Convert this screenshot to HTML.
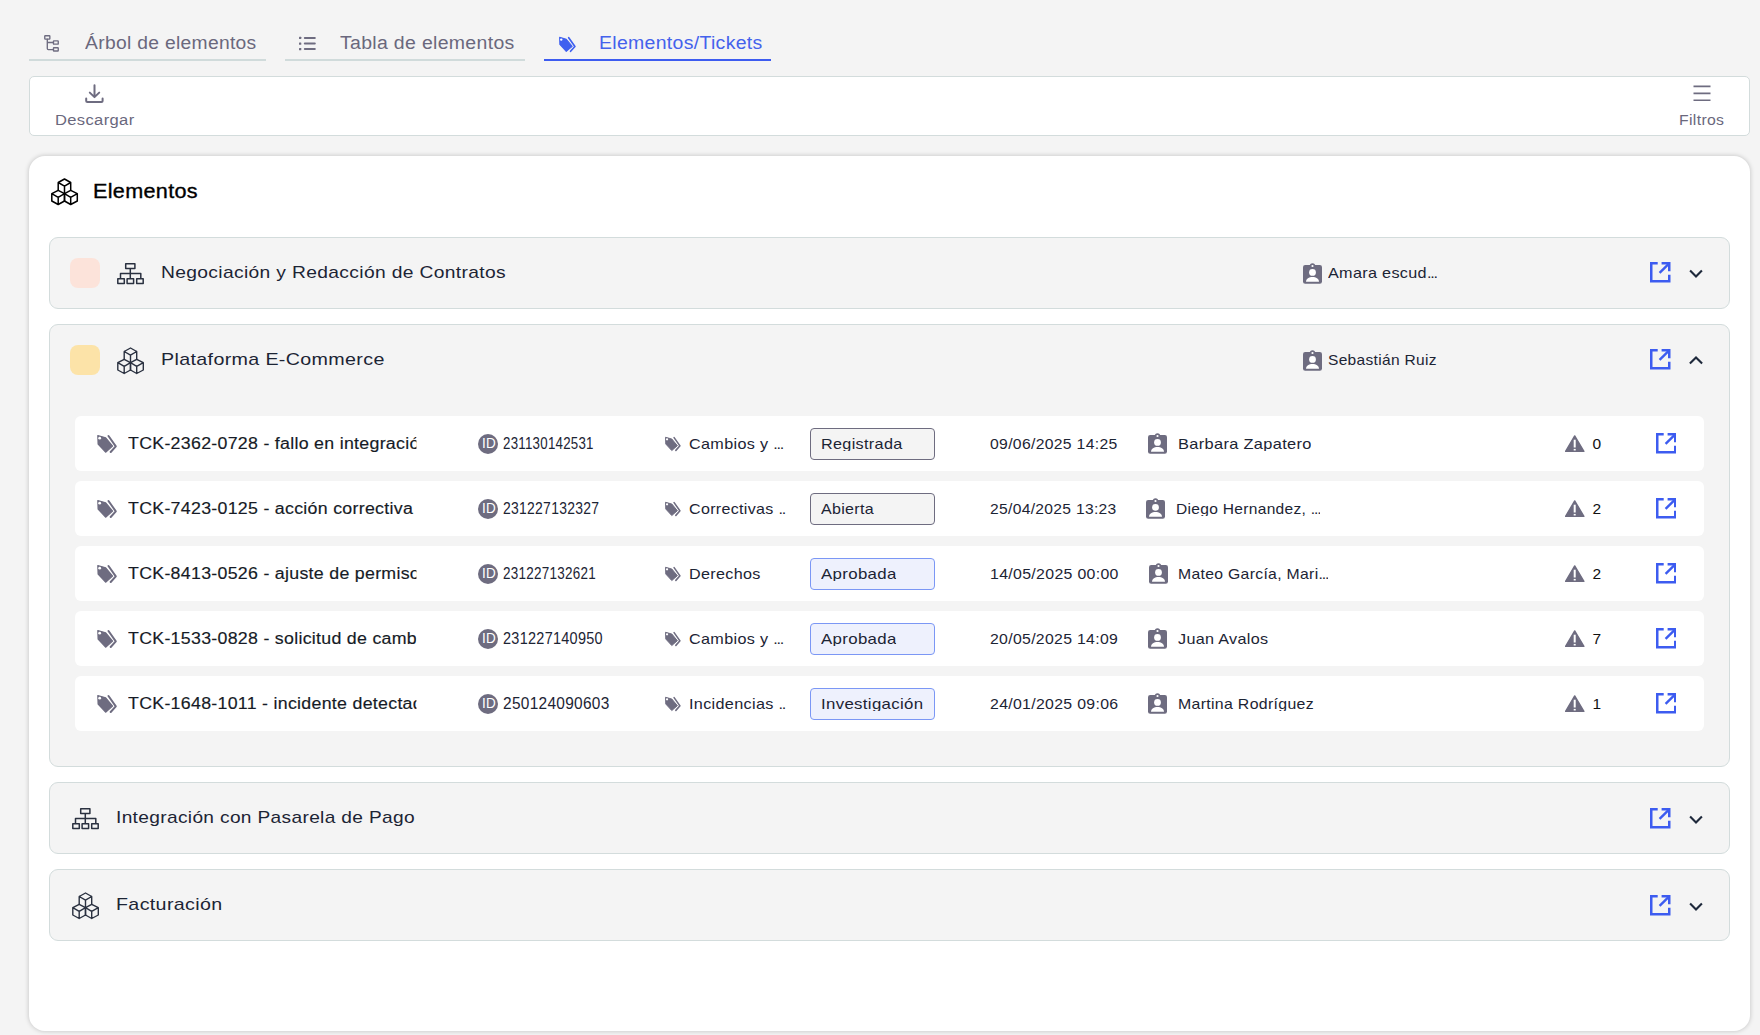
<!DOCTYPE html>
<html><head><meta charset="utf-8"><title>Elementos</title>
<style>
html,body{margin:0;padding:0;}
body{width:1760px;height:1035px;overflow:hidden;background:#f4f4f4;position:relative;font-family:"Liberation Sans", sans-serif;}
.a{position:absolute;display:block;}
.t{position:absolute;white-space:nowrap;line-height:1;}
.box{position:absolute;box-sizing:border-box;}
.dd{letter-spacing:-1.1px;}
</style></head><body>
<div class="box" style="left:29px;top:59px;width:237px;height:2px;background:#d0dbdb"></div>
<div class="box" style="left:285px;top:59px;width:240px;height:2px;background:#d0dbdb"></div>
<div class="box" style="left:544px;top:59px;width:227px;height:2px;background:#3d5cf0"></div>
<svg class="a" style="left:43px;top:34px" width="18" height="20" viewBox="0 0 18 20" fill="none" stroke="#6e6c80" stroke-width="1.35" stroke-linecap="round" stroke-linejoin="round">
<rect x="1.75" y="1.75" width="5.1" height="3.3" rx="0.5"/><rect x="10.45" y="6.85" width="4.8" height="3.3" rx="0.5"/><rect x="10.45" y="13.75" width="4.8" height="3.2" rx="0.5"/>
<path d="M4.3 5.05V14.6Q4.3 15.6 5.3 15.6H10.45M4.3 8.5H10.45"/></svg>
<svg class="a" style="left:299px;top:36px" width="18" height="16" viewBox="0 0 18 16" fill="#6e6c80">
<rect x="0" y="0.8" width="2.3" height="2.3" rx=".5"/><rect x="0" y="6.4" width="2.3" height="2.3" rx=".5"/><rect x="0" y="11.9" width="2.3" height="2.3" rx=".5"/>
<rect x="4.8" y="0.9" width="12" height="2.1" rx="1"/><rect x="4.8" y="6.5" width="12" height="2.1" rx="1"/><rect x="4.8" y="12" width="12" height="2.1" rx="1"/></svg>
<svg class="a" style="left:557.5px;top:35.6px" width="18" height="17" viewBox="0 0 21 20">
<path fill="#3f60ef" stroke="#3f60ef" stroke-width="1.2" stroke-linejoin="round" d="M1.8 1.6L9.7 3.8L16.6 12.1L9.6 18.2L2.1 10Z"/>
<circle cx="3.7" cy="4.2" r="1.4" fill="#fff"/>
<path fill="none" stroke="#3f60ef" stroke-width="2" stroke-linecap="round" stroke-linejoin="round" d="M12.5 2L19.8 12.3L14.7 18"/></svg>
<div class="t" style="left:84.5px;top:33.8px;font-size:18px;letter-spacing:0.3px;color:#6a687d;font-weight:400;transform:scaleX(1.069);transform-origin:0 0;">Árbol de elementos</div>
<div class="t" style="left:340.0px;top:33.8px;font-size:18px;letter-spacing:0.3px;color:#6a687d;font-weight:400;transform:scaleX(1.081);transform-origin:0 0;">Tabla de elementos</div>
<div class="t" style="left:599.0px;top:33.8px;font-size:18px;letter-spacing:0.3px;color:#4462ec;font-weight:400;transform:scaleX(1.08);transform-origin:0 0;">Elementos/Tickets</div>
<div class="box" style="left:29px;top:76px;width:1721px;height:60px;background:#fff;border:1px solid #d3dcdc;border-radius:5px"></div>
<svg class="a" style="left:85px;top:84px" width="20" height="20" viewBox="0 0 20 20" fill="none" stroke="#6e6c80" stroke-width="2" stroke-linecap="round" stroke-linejoin="round">
<path d="M9.5 1.2V12.8M4.8 8.6L9.5 13.1L14.2 8.6M1.2 14.6V17Q1.2 18.1 2.4 18.1H16.5Q17.6 18.1 17.6 17V14.6"/></svg>
<div class="t" style="left:55.0px;top:113.1px;font-size:14px;letter-spacing:0.3px;color:#6a687d;font-weight:400;transform:scaleX(1.182);transform-origin:0 0;">Descargar</div>
<svg class="a" style="left:1692.6px;top:85.3px" width="18" height="16" viewBox="0 0 18 16" fill="none" stroke="#6e6c80" stroke-width="1.6">
<path d="M0.5 1.4H17.5M0.5 8.4H17.5M0.5 15.4H17.5"/></svg>
<div class="t" style="left:1679.0px;top:113.1px;font-size:14px;letter-spacing:0.3px;color:#6a687d;font-weight:400;transform:scaleX(1.128);transform-origin:0 0;">Filtros</div>
<div class="box" style="left:29px;top:156px;width:1721px;height:875px;background:#fff;border-radius:16px;box-shadow:0 0 5px rgba(0,0,0,0.22)"></div>
<svg class="a" style="left:51px;top:178px" width="28" height="28" viewBox="0 0 28 28" fill="none" stroke="#000" stroke-width="1.5" stroke-linejoin="round" stroke-linecap="round">
<path d="M13.5 1L19.7 4.5L13.5 8.1L7.2 4.5Z M7.2 4.5V12.3 M19.7 4.5V12.3 M13.5 8.1V23"/>
<path d="M7.2 12.3L13.5 15.7L7.2 19.3L0.8 15.7Z M0.8 15.7V23L7.2 26.5L13.5 23V15.7 M7.2 19.3V26.5"/>
<path d="M19.7 12.3L26.3 15.7L19.7 19.3L13.5 15.7Z M26.3 15.7V23L19.7 26.5L13.5 23 M19.7 19.3V26.5"/>
</svg>
<div class="t" style="left:93.0px;top:180.8px;font-size:20px;letter-spacing:0.3px;color:#000;font-weight:400;transform:scaleX(1.08);transform-origin:0 0;-webkit-text-stroke:0.35px #000;">Elementos</div>
<div class="box" style="left:49px;top:237px;width:1681px;height:72px;background:#f4f4f4;border:1px solid #d3dcdc;border-radius:9px"></div>
<div class="box" style="left:70px;top:258px;width:30px;height:30px;background:#fce3da;border-radius:8px"></div>
<svg class="a" style="left:117px;top:263px" width="28" height="22" viewBox="0 0 28 22" fill="none" stroke="#2a3140" stroke-width="1.5" stroke-linejoin="round">
<rect x="8.7" y="0.8" width="9.2" height="4.8"/><path d="M13.3 5.6V10.6M3.5 15.8V10.6H23.8V15.8M13.3 10.6V15.8"/>
<rect x="0.8" y="15.8" width="6.5" height="4.8"/><rect x="10.1" y="15.8" width="6.5" height="4.8"/><rect x="19.7" y="15.8" width="6.5" height="4.8"/>
</svg>
<div class="t" style="left:161.0px;top:264.1px;font-size:17px;letter-spacing:0.3px;color:#1c2434;font-weight:400;transform:scaleX(1.132);transform-origin:0 0;">Negociación y Redacción de Contratos</div>
<svg class="a" style="left:1303px;top:263px" width="19" height="21" viewBox="0 0 19 21">
<rect x="0" y="2" width="19" height="18.8" rx="2.2" fill="#6e6c80"/><circle cx="9.5" cy="3" r="2.7" fill="#6e6c80"/><circle cx="9.5" cy="3" r="1.1" fill="#fff"/>
<circle cx="9.5" cy="9.4" r="3.4" fill="#fff"/><path fill="#fff" d="M3 18.8C3 15.6 6 13.9 9.5 13.9S16 15.6 16 18.8Z"/></svg>
<div class="t" style="left:1327.5px;top:265.3px;font-size:15px;letter-spacing:0.3px;color:#1c2434;font-weight:400;transform:scaleX(1.079);transform-origin:0 0;">Amara escud<span class="dd">...</span></div>
<svg class="a" style="left:1650px;top:262px" width="20.5" height="20.5" viewBox="0 0 20.5 20.5">
<path fill="#3d5cf0" d="M0 0H7.7V2.5H2.5V18H18V12.75H20.5V20.5H0Z M11.6 0H20.5V9.3H18V2.5H11.6Z"/><path stroke="#3d5cf0" stroke-width="2.4" d="M9.6 10.9L19.2 1.3"/></svg>
<svg class="a" style="left:1689.1px;top:269px" width="14" height="9" viewBox="0 0 14 9" fill="none" stroke="#1e293b" stroke-width="2.1" stroke-linecap="butt" stroke-linejoin="miter"><path d="M1.1 1.5L7 7.4L12.9 1.5"/></svg>
<div class="box" style="left:49px;top:324px;width:1681px;height:443px;background:#f4f4f4;border:1px solid #d3dcdc;border-radius:9px"></div>
<div class="box" style="left:70px;top:345px;width:30px;height:30px;background:#fce3a8;border-radius:8px"></div>
<svg class="a" style="left:116.5px;top:347px" width="28" height="28" viewBox="0 0 28 28" fill="none" stroke="#2a3140" stroke-width="1.4" stroke-linejoin="round" stroke-linecap="round">
<path d="M13.5 1L19.7 4.5L13.5 8.1L7.2 4.5Z M7.2 4.5V12.3 M19.7 4.5V12.3 M13.5 8.1V23"/>
<path d="M7.2 12.3L13.5 15.7L7.2 19.3L0.8 15.7Z M0.8 15.7V23L7.2 26.5L13.5 23V15.7 M7.2 19.3V26.5"/>
<path d="M19.7 12.3L26.3 15.7L19.7 19.3L13.5 15.7Z M26.3 15.7V23L19.7 26.5L13.5 23 M19.7 19.3V26.5"/>
</svg>
<div class="t" style="left:161.0px;top:350.9px;font-size:17px;letter-spacing:0.3px;color:#1c2434;font-weight:400;transform:scaleX(1.157);transform-origin:0 0;">Plataforma E-Commerce</div>
<svg class="a" style="left:1303px;top:350px" width="19" height="21" viewBox="0 0 19 21">
<rect x="0" y="2" width="19" height="18.8" rx="2.2" fill="#6e6c80"/><circle cx="9.5" cy="3" r="2.7" fill="#6e6c80"/><circle cx="9.5" cy="3" r="1.1" fill="#fff"/>
<circle cx="9.5" cy="9.4" r="3.4" fill="#fff"/><path fill="#fff" d="M3 18.8C3 15.6 6 13.9 9.5 13.9S16 15.6 16 18.8Z"/></svg>
<div class="t" style="left:1327.5px;top:352.3px;font-size:15px;letter-spacing:0.3px;color:#1c2434;font-weight:400;transform:scaleX(1.035);transform-origin:0 0;">Sebastián Ruiz</div>
<svg class="a" style="left:1650px;top:349px" width="20.5" height="20.5" viewBox="0 0 20.5 20.5">
<path fill="#3d5cf0" d="M0 0H7.7V2.5H2.5V18H18V12.75H20.5V20.5H0Z M11.6 0H20.5V9.3H18V2.5H11.6Z"/><path stroke="#3d5cf0" stroke-width="2.4" d="M9.6 10.9L19.2 1.3"/></svg>
<svg class="a" style="left:1689.3px;top:356.4px" width="14" height="9" viewBox="0 0 14 9" fill="none" stroke="#1e293b" stroke-width="2.1" stroke-linecap="butt" stroke-linejoin="miter"><path d="M0.9 7.6L7 1.5L13.1 7.6"/></svg>
<div class="box" style="left:75px;top:416px;width:1629px;height:55px;background:#fff;border-radius:6px"></div>
<svg class="a" style="left:96px;top:434px" width="21" height="20" viewBox="0 0 21 20">
<path fill="#6e6c80" stroke="#6e6c80" stroke-width="1.2" stroke-linejoin="round" d="M1.8 1.6L9.7 3.8L16.6 12.1L9.6 18.2L2.1 10Z"/>
<circle cx="3.7" cy="4.2" r="1.4" fill="#fff"/>
<path fill="none" stroke="#6e6c80" stroke-width="2" stroke-linecap="round" stroke-linejoin="round" d="M12.5 2L19.8 12.3L14.7 18"/></svg>
<div class="t" style="left:128.2px;top:432.8px;height:21.8px;width:252.6px;overflow:hidden;line-height:21.8px;font-size:15.6px;letter-spacing:0.25px;color:#161b26;font-weight:400;transform:scaleX(1.14);transform-origin:0 0;-webkit-text-stroke:0.15px #161b26;">TCK-2362-0728 - fallo en integración de pagos</div>
<div class="box" style="left:478px;top:434px;width:20px;height:20px;border-radius:50%;background:#6e6c80"></div>
<div class="t" style="left:481.6px;top:435.0px;font-size:15px;letter-spacing:0.3px;color:#fff;font-weight:400;transform:scaleX(0.9);transform-origin:0 0;">ID</div>
<div class="t" style="left:503.0px;top:435.9px;font-size:15.6px;letter-spacing:0.3px;color:#1c2434;font-weight:400;transform:scaleX(0.852);transform-origin:0 0;">231130142531</div>
<svg class="a" style="left:663.5px;top:436px" width="17" height="16" viewBox="0 0 21 20">
<path fill="#6e6c80" stroke="#6e6c80" stroke-width="1.2" stroke-linejoin="round" d="M1.8 1.6L9.7 3.8L16.6 12.1L9.6 18.2L2.1 10Z"/>
<circle cx="3.7" cy="4.2" r="1.4" fill="#fff"/>
<path fill="none" stroke="#6e6c80" stroke-width="2" stroke-linecap="round" stroke-linejoin="round" d="M12.5 2L19.8 12.3L14.7 18"/></svg>
<div class="t" style="left:689.0px;top:435.9px;font-size:15px;letter-spacing:0.3px;color:#1c2434;font-weight:400;transform:scaleX(1.079);transform-origin:0 0;">Cambios y <span class="dd">...</span></div>
<div class="box" style="left:810px;top:428px;width:125px;height:32px;background:#f4f4f4;border:1px solid #6e6c80;border-radius:4px"></div>
<div class="t" style="left:820.5px;top:433.4px;height:17.7px;overflow:hidden;line-height:21.0px;font-size:15px;letter-spacing:0.3px;color:#1c2434;font-weight:400;transform:scaleX(1.08);transform-origin:0 0;">Registrada</div>
<div class="t" style="left:989.5px;top:436.2px;font-size:15px;letter-spacing:0.3px;color:#1c2434;font-weight:400;transform:scaleX(1.049);transform-origin:0 0;">09/06/2025 14:25</div>
<svg class="a" style="left:1148px;top:433px" width="19" height="21" viewBox="0 0 19 21">
<rect x="0" y="2" width="19" height="18.8" rx="2.2" fill="#6e6c80"/><circle cx="9.5" cy="3" r="2.7" fill="#6e6c80"/><circle cx="9.5" cy="3" r="1.1" fill="#fff"/>
<circle cx="9.5" cy="9.4" r="3.4" fill="#fff"/><path fill="#fff" d="M3 18.8C3 15.6 6 13.9 9.5 13.9S16 15.6 16 18.8Z"/></svg>
<div class="t" style="left:1177.8px;top:433.2px;height:17.7px;overflow:hidden;line-height:21.0px;font-size:15px;letter-spacing:0.3px;color:#1c2434;font-weight:400;transform:scaleX(1.093);transform-origin:0 0;">Barbara Zapatero</div>
<svg class="a" style="left:1565px;top:435px" width="20" height="18" viewBox="0 0 20 18">
<path fill="#6e6c80" stroke="#6e6c80" stroke-width="1.4" stroke-linejoin="round" d="M9.7 0.9L18.9 16.3H0.6Z"/>
<rect x="8.7" y="4.7" width="2" height="7.8" fill="#fff"/><rect x="8.7" y="13.9" width="2" height="1.6" fill="#fff"/></svg>
<div class="t" style="left:1592.4px;top:436.2px;font-size:15.5px;letter-spacing:0px;color:#111;font-weight:400;">0</div>
<svg class="a" style="left:1655.5px;top:433.3px" width="20.5" height="20.5" viewBox="0 0 20.5 20.5">
<path fill="#3d5cf0" d="M0 0H7.7V2.5H2.5V18H18V12.75H20.5V20.5H0Z M11.6 0H20.5V9.3H18V2.5H11.6Z"/><path stroke="#3d5cf0" stroke-width="2.4" d="M9.6 10.9L19.2 1.3"/></svg>
<div class="box" style="left:75px;top:481px;width:1629px;height:55px;background:#fff;border-radius:6px"></div>
<svg class="a" style="left:96px;top:499px" width="21" height="20" viewBox="0 0 21 20">
<path fill="#6e6c80" stroke="#6e6c80" stroke-width="1.2" stroke-linejoin="round" d="M1.8 1.6L9.7 3.8L16.6 12.1L9.6 18.2L2.1 10Z"/>
<circle cx="3.7" cy="4.2" r="1.4" fill="#fff"/>
<path fill="none" stroke="#6e6c80" stroke-width="2" stroke-linecap="round" stroke-linejoin="round" d="M12.5 2L19.8 12.3L14.7 18"/></svg>
<div class="t" style="left:128.2px;top:497.8px;height:21.8px;width:252.6px;overflow:hidden;line-height:21.8px;font-size:15.6px;letter-spacing:0.25px;color:#161b26;font-weight:400;transform:scaleX(1.14);transform-origin:0 0;-webkit-text-stroke:0.15px #161b26;">TCK-7423-0125 - acción correctiva</div>
<div class="box" style="left:478px;top:499px;width:20px;height:20px;border-radius:50%;background:#6e6c80"></div>
<div class="t" style="left:481.6px;top:500.0px;font-size:15px;letter-spacing:0.3px;color:#fff;font-weight:400;transform:scaleX(0.9);transform-origin:0 0;">ID</div>
<div class="t" style="left:503.0px;top:500.9px;font-size:15.6px;letter-spacing:0.3px;color:#1c2434;font-weight:400;transform:scaleX(0.894);transform-origin:0 0;">231227132327</div>
<svg class="a" style="left:663.5px;top:501px" width="17" height="16" viewBox="0 0 21 20">
<path fill="#6e6c80" stroke="#6e6c80" stroke-width="1.2" stroke-linejoin="round" d="M1.8 1.6L9.7 3.8L16.6 12.1L9.6 18.2L2.1 10Z"/>
<circle cx="3.7" cy="4.2" r="1.4" fill="#fff"/>
<path fill="none" stroke="#6e6c80" stroke-width="2" stroke-linecap="round" stroke-linejoin="round" d="M12.5 2L19.8 12.3L14.7 18"/></svg>
<div class="t" style="left:689.0px;top:500.9px;font-size:15px;letter-spacing:0.3px;color:#1c2434;font-weight:400;transform:scaleX(1.069);transform-origin:0 0;">Correctivas <span class="dd">..</span></div>
<div class="box" style="left:810px;top:493px;width:125px;height:32px;background:#f4f4f4;border:1px solid #6e6c80;border-radius:4px"></div>
<div class="t" style="left:820.5px;top:498.4px;height:17.7px;overflow:hidden;line-height:21.0px;font-size:15px;letter-spacing:0.3px;color:#1c2434;font-weight:400;transform:scaleX(1.068);transform-origin:0 0;">Abierta</div>
<div class="t" style="left:989.5px;top:501.2px;font-size:15px;letter-spacing:0.3px;color:#1c2434;font-weight:400;transform:scaleX(1.041);transform-origin:0 0;">25/04/2025 13:23</div>
<svg class="a" style="left:1146px;top:498px" width="19" height="21" viewBox="0 0 19 21">
<rect x="0" y="2" width="19" height="18.8" rx="2.2" fill="#6e6c80"/><circle cx="9.5" cy="3" r="2.7" fill="#6e6c80"/><circle cx="9.5" cy="3" r="1.1" fill="#fff"/>
<circle cx="9.5" cy="9.4" r="3.4" fill="#fff"/><path fill="#fff" d="M3 18.8C3 15.6 6 13.9 9.5 13.9S16 15.6 16 18.8Z"/></svg>
<div class="t" style="left:1175.7px;top:498.2px;height:17.7px;overflow:hidden;line-height:21.0px;font-size:15px;letter-spacing:0.3px;color:#1c2434;font-weight:400;transform:scaleX(1.036);transform-origin:0 0;">Diego Hernandez, <span class="dd">...</span></div>
<svg class="a" style="left:1565px;top:500px" width="20" height="18" viewBox="0 0 20 18">
<path fill="#6e6c80" stroke="#6e6c80" stroke-width="1.4" stroke-linejoin="round" d="M9.7 0.9L18.9 16.3H0.6Z"/>
<rect x="8.7" y="4.7" width="2" height="7.8" fill="#fff"/><rect x="8.7" y="13.9" width="2" height="1.6" fill="#fff"/></svg>
<div class="t" style="left:1592.4px;top:501.2px;font-size:15.5px;letter-spacing:0px;color:#111;font-weight:400;">2</div>
<svg class="a" style="left:1655.5px;top:498.3px" width="20.5" height="20.5" viewBox="0 0 20.5 20.5">
<path fill="#3d5cf0" d="M0 0H7.7V2.5H2.5V18H18V12.75H20.5V20.5H0Z M11.6 0H20.5V9.3H18V2.5H11.6Z"/><path stroke="#3d5cf0" stroke-width="2.4" d="M9.6 10.9L19.2 1.3"/></svg>
<div class="box" style="left:75px;top:546px;width:1629px;height:55px;background:#fff;border-radius:6px"></div>
<svg class="a" style="left:96px;top:564px" width="21" height="20" viewBox="0 0 21 20">
<path fill="#6e6c80" stroke="#6e6c80" stroke-width="1.2" stroke-linejoin="round" d="M1.8 1.6L9.7 3.8L16.6 12.1L9.6 18.2L2.1 10Z"/>
<circle cx="3.7" cy="4.2" r="1.4" fill="#fff"/>
<path fill="none" stroke="#6e6c80" stroke-width="2" stroke-linecap="round" stroke-linejoin="round" d="M12.5 2L19.8 12.3L14.7 18"/></svg>
<div class="t" style="left:128.2px;top:562.8px;height:21.8px;width:252.6px;overflow:hidden;line-height:21.8px;font-size:15.6px;letter-spacing:0.25px;color:#161b26;font-weight:400;transform:scaleX(1.14);transform-origin:0 0;-webkit-text-stroke:0.15px #161b26;">TCK-8413-0526 - ajuste de permisos de usuario</div>
<div class="box" style="left:478px;top:564px;width:20px;height:20px;border-radius:50%;background:#6e6c80"></div>
<div class="t" style="left:481.6px;top:565.0px;font-size:15px;letter-spacing:0.3px;color:#fff;font-weight:400;transform:scaleX(0.9);transform-origin:0 0;">ID</div>
<div class="t" style="left:503.0px;top:565.9px;font-size:15.6px;letter-spacing:0.3px;color:#1c2434;font-weight:400;transform:scaleX(0.863);transform-origin:0 0;">231227132621</div>
<svg class="a" style="left:663.5px;top:566px" width="17" height="16" viewBox="0 0 21 20">
<path fill="#6e6c80" stroke="#6e6c80" stroke-width="1.2" stroke-linejoin="round" d="M1.8 1.6L9.7 3.8L16.6 12.1L9.6 18.2L2.1 10Z"/>
<circle cx="3.7" cy="4.2" r="1.4" fill="#fff"/>
<path fill="none" stroke="#6e6c80" stroke-width="2" stroke-linecap="round" stroke-linejoin="round" d="M12.5 2L19.8 12.3L14.7 18"/></svg>
<div class="t" style="left:689.0px;top:565.9px;font-size:15px;letter-spacing:0.3px;color:#1c2434;font-weight:400;transform:scaleX(1.077);transform-origin:0 0;">Derechos</div>
<div class="box" style="left:810px;top:558px;width:125px;height:32px;background:#eef1fd;border:1px solid #7b97f5;border-radius:4px"></div>
<div class="t" style="left:820.5px;top:563.4px;height:17.7px;overflow:hidden;line-height:21.0px;font-size:15px;letter-spacing:0.3px;color:#1c2434;font-weight:400;transform:scaleX(1.122);transform-origin:0 0;">Aprobada</div>
<div class="t" style="left:989.5px;top:566.2px;font-size:15px;letter-spacing:0.3px;color:#1c2434;font-weight:400;transform:scaleX(1.059);transform-origin:0 0;">14/05/2025 00:00</div>
<svg class="a" style="left:1149px;top:563px" width="19" height="21" viewBox="0 0 19 21">
<rect x="0" y="2" width="19" height="18.8" rx="2.2" fill="#6e6c80"/><circle cx="9.5" cy="3" r="2.7" fill="#6e6c80"/><circle cx="9.5" cy="3" r="1.1" fill="#fff"/>
<circle cx="9.5" cy="9.4" r="3.4" fill="#fff"/><path fill="#fff" d="M3 18.8C3 15.6 6 13.9 9.5 13.9S16 15.6 16 18.8Z"/></svg>
<div class="t" style="left:1178.3px;top:563.2px;height:17.7px;overflow:hidden;line-height:21.0px;font-size:15px;letter-spacing:0.3px;color:#1c2434;font-weight:400;transform:scaleX(1.05);transform-origin:0 0;">Mateo García, Mari<span class="dd">...</span></div>
<svg class="a" style="left:1565px;top:565px" width="20" height="18" viewBox="0 0 20 18">
<path fill="#6e6c80" stroke="#6e6c80" stroke-width="1.4" stroke-linejoin="round" d="M9.7 0.9L18.9 16.3H0.6Z"/>
<rect x="8.7" y="4.7" width="2" height="7.8" fill="#fff"/><rect x="8.7" y="13.9" width="2" height="1.6" fill="#fff"/></svg>
<div class="t" style="left:1592.4px;top:566.2px;font-size:15.5px;letter-spacing:0px;color:#111;font-weight:400;">2</div>
<svg class="a" style="left:1655.5px;top:563.3px" width="20.5" height="20.5" viewBox="0 0 20.5 20.5">
<path fill="#3d5cf0" d="M0 0H7.7V2.5H2.5V18H18V12.75H20.5V20.5H0Z M11.6 0H20.5V9.3H18V2.5H11.6Z"/><path stroke="#3d5cf0" stroke-width="2.4" d="M9.6 10.9L19.2 1.3"/></svg>
<div class="box" style="left:75px;top:611px;width:1629px;height:55px;background:#fff;border-radius:6px"></div>
<svg class="a" style="left:96px;top:629px" width="21" height="20" viewBox="0 0 21 20">
<path fill="#6e6c80" stroke="#6e6c80" stroke-width="1.2" stroke-linejoin="round" d="M1.8 1.6L9.7 3.8L16.6 12.1L9.6 18.2L2.1 10Z"/>
<circle cx="3.7" cy="4.2" r="1.4" fill="#fff"/>
<path fill="none" stroke="#6e6c80" stroke-width="2" stroke-linecap="round" stroke-linejoin="round" d="M12.5 2L19.8 12.3L14.7 18"/></svg>
<div class="t" style="left:128.2px;top:627.8px;height:21.8px;width:252.6px;overflow:hidden;line-height:21.8px;font-size:15.6px;letter-spacing:0.25px;color:#161b26;font-weight:400;transform:scaleX(1.14);transform-origin:0 0;-webkit-text-stroke:0.15px #161b26;">TCK-1533-0828 - solicitud de cambio de proveedor</div>
<div class="box" style="left:478px;top:629px;width:20px;height:20px;border-radius:50%;background:#6e6c80"></div>
<div class="t" style="left:481.6px;top:630.0px;font-size:15px;letter-spacing:0.3px;color:#fff;font-weight:400;transform:scaleX(0.9);transform-origin:0 0;">ID</div>
<div class="t" style="left:503.0px;top:630.9px;font-size:15.6px;letter-spacing:0.3px;color:#1c2434;font-weight:400;transform:scaleX(0.928);transform-origin:0 0;">231227140950</div>
<svg class="a" style="left:663.5px;top:631px" width="17" height="16" viewBox="0 0 21 20">
<path fill="#6e6c80" stroke="#6e6c80" stroke-width="1.2" stroke-linejoin="round" d="M1.8 1.6L9.7 3.8L16.6 12.1L9.6 18.2L2.1 10Z"/>
<circle cx="3.7" cy="4.2" r="1.4" fill="#fff"/>
<path fill="none" stroke="#6e6c80" stroke-width="2" stroke-linecap="round" stroke-linejoin="round" d="M12.5 2L19.8 12.3L14.7 18"/></svg>
<div class="t" style="left:689.0px;top:630.9px;font-size:15px;letter-spacing:0.3px;color:#1c2434;font-weight:400;transform:scaleX(1.079);transform-origin:0 0;">Cambios y <span class="dd">...</span></div>
<div class="box" style="left:810px;top:623px;width:125px;height:32px;background:#eef1fd;border:1px solid #7b97f5;border-radius:4px"></div>
<div class="t" style="left:820.5px;top:628.4px;height:17.7px;overflow:hidden;line-height:21.0px;font-size:15px;letter-spacing:0.3px;color:#1c2434;font-weight:400;transform:scaleX(1.122);transform-origin:0 0;">Aprobada</div>
<div class="t" style="left:989.5px;top:631.2px;font-size:15px;letter-spacing:0.3px;color:#1c2434;font-weight:400;transform:scaleX(1.054);transform-origin:0 0;">20/05/2025 14:09</div>
<svg class="a" style="left:1148px;top:628px" width="19" height="21" viewBox="0 0 19 21">
<rect x="0" y="2" width="19" height="18.8" rx="2.2" fill="#6e6c80"/><circle cx="9.5" cy="3" r="2.7" fill="#6e6c80"/><circle cx="9.5" cy="3" r="1.1" fill="#fff"/>
<circle cx="9.5" cy="9.4" r="3.4" fill="#fff"/><path fill="#fff" d="M3 18.8C3 15.6 6 13.9 9.5 13.9S16 15.6 16 18.8Z"/></svg>
<div class="t" style="left:1177.9px;top:628.2px;height:17.7px;overflow:hidden;line-height:21.0px;font-size:15px;letter-spacing:0.3px;color:#1c2434;font-weight:400;transform:scaleX(1.078);transform-origin:0 0;">Juan Avalos</div>
<svg class="a" style="left:1565px;top:630px" width="20" height="18" viewBox="0 0 20 18">
<path fill="#6e6c80" stroke="#6e6c80" stroke-width="1.4" stroke-linejoin="round" d="M9.7 0.9L18.9 16.3H0.6Z"/>
<rect x="8.7" y="4.7" width="2" height="7.8" fill="#fff"/><rect x="8.7" y="13.9" width="2" height="1.6" fill="#fff"/></svg>
<div class="t" style="left:1592.4px;top:631.2px;font-size:15.5px;letter-spacing:0px;color:#111;font-weight:400;">7</div>
<svg class="a" style="left:1655.5px;top:628.3px" width="20.5" height="20.5" viewBox="0 0 20.5 20.5">
<path fill="#3d5cf0" d="M0 0H7.7V2.5H2.5V18H18V12.75H20.5V20.5H0Z M11.6 0H20.5V9.3H18V2.5H11.6Z"/><path stroke="#3d5cf0" stroke-width="2.4" d="M9.6 10.9L19.2 1.3"/></svg>
<div class="box" style="left:75px;top:676px;width:1629px;height:55px;background:#fff;border-radius:6px"></div>
<svg class="a" style="left:96px;top:694px" width="21" height="20" viewBox="0 0 21 20">
<path fill="#6e6c80" stroke="#6e6c80" stroke-width="1.2" stroke-linejoin="round" d="M1.8 1.6L9.7 3.8L16.6 12.1L9.6 18.2L2.1 10Z"/>
<circle cx="3.7" cy="4.2" r="1.4" fill="#fff"/>
<path fill="none" stroke="#6e6c80" stroke-width="2" stroke-linecap="round" stroke-linejoin="round" d="M12.5 2L19.8 12.3L14.7 18"/></svg>
<div class="t" style="left:128.2px;top:692.8px;height:21.8px;width:252.6px;overflow:hidden;line-height:21.8px;font-size:15.6px;letter-spacing:0.25px;color:#161b26;font-weight:400;transform:scaleX(1.14);transform-origin:0 0;-webkit-text-stroke:0.15px #161b26;">TCK-1648-1011 - incidente detectado en servidor</div>
<div class="box" style="left:478px;top:694px;width:20px;height:20px;border-radius:50%;background:#6e6c80"></div>
<div class="t" style="left:481.6px;top:695.0px;font-size:15px;letter-spacing:0.3px;color:#fff;font-weight:400;transform:scaleX(0.9);transform-origin:0 0;">ID</div>
<div class="t" style="left:503.0px;top:695.9px;font-size:15.6px;letter-spacing:0.3px;color:#1c2434;font-weight:400;transform:scaleX(0.99);transform-origin:0 0;">250124090603</div>
<svg class="a" style="left:663.5px;top:696px" width="17" height="16" viewBox="0 0 21 20">
<path fill="#6e6c80" stroke="#6e6c80" stroke-width="1.2" stroke-linejoin="round" d="M1.8 1.6L9.7 3.8L16.6 12.1L9.6 18.2L2.1 10Z"/>
<circle cx="3.7" cy="4.2" r="1.4" fill="#fff"/>
<path fill="none" stroke="#6e6c80" stroke-width="2" stroke-linecap="round" stroke-linejoin="round" d="M12.5 2L19.8 12.3L14.7 18"/></svg>
<div class="t" style="left:689.0px;top:695.9px;font-size:15px;letter-spacing:0.3px;color:#1c2434;font-weight:400;transform:scaleX(1.081);transform-origin:0 0;">Incidencias <span class="dd">..</span></div>
<div class="box" style="left:810px;top:688px;width:125px;height:32px;background:#eef1fd;border:1px solid #7b97f5;border-radius:4px"></div>
<div class="t" style="left:820.5px;top:693.4px;height:17.7px;overflow:hidden;line-height:21.0px;font-size:15px;letter-spacing:0.3px;color:#1c2434;font-weight:400;transform:scaleX(1.12);transform-origin:0 0;">Investigación</div>
<div class="t" style="left:989.5px;top:696.2px;font-size:15px;letter-spacing:0.3px;color:#1c2434;font-weight:400;transform:scaleX(1.056);transform-origin:0 0;">24/01/2025 09:06</div>
<svg class="a" style="left:1148px;top:693px" width="19" height="21" viewBox="0 0 19 21">
<rect x="0" y="2" width="19" height="18.8" rx="2.2" fill="#6e6c80"/><circle cx="9.5" cy="3" r="2.7" fill="#6e6c80"/><circle cx="9.5" cy="3" r="1.1" fill="#fff"/>
<circle cx="9.5" cy="9.4" r="3.4" fill="#fff"/><path fill="#fff" d="M3 18.8C3 15.6 6 13.9 9.5 13.9S16 15.6 16 18.8Z"/></svg>
<div class="t" style="left:1177.9px;top:693.2px;height:17.7px;overflow:hidden;line-height:21.0px;font-size:15px;letter-spacing:0.3px;color:#1c2434;font-weight:400;transform:scaleX(1.058);transform-origin:0 0;">Martina Rodríguez</div>
<svg class="a" style="left:1565px;top:695px" width="20" height="18" viewBox="0 0 20 18">
<path fill="#6e6c80" stroke="#6e6c80" stroke-width="1.4" stroke-linejoin="round" d="M9.7 0.9L18.9 16.3H0.6Z"/>
<rect x="8.7" y="4.7" width="2" height="7.8" fill="#fff"/><rect x="8.7" y="13.9" width="2" height="1.6" fill="#fff"/></svg>
<div class="t" style="left:1592.4px;top:696.2px;font-size:15.5px;letter-spacing:0px;color:#111;font-weight:400;">1</div>
<svg class="a" style="left:1655.5px;top:693.3px" width="20.5" height="20.5" viewBox="0 0 20.5 20.5">
<path fill="#3d5cf0" d="M0 0H7.7V2.5H2.5V18H18V12.75H20.5V20.5H0Z M11.6 0H20.5V9.3H18V2.5H11.6Z"/><path stroke="#3d5cf0" stroke-width="2.4" d="M9.6 10.9L19.2 1.3"/></svg>
<div class="box" style="left:49px;top:782px;width:1681px;height:72px;background:#f4f4f4;border:1px solid #d3dcdc;border-radius:9px"></div>
<svg class="a" style="left:72px;top:808px" width="28" height="22" viewBox="0 0 28 22" fill="none" stroke="#2a3140" stroke-width="1.5" stroke-linejoin="round">
<rect x="8.7" y="0.8" width="9.2" height="4.8"/><path d="M13.3 5.6V10.6M3.5 15.8V10.6H23.8V15.8M13.3 10.6V15.8"/>
<rect x="0.8" y="15.8" width="6.5" height="4.8"/><rect x="10.1" y="15.8" width="6.5" height="4.8"/><rect x="19.7" y="15.8" width="6.5" height="4.8"/>
</svg>
<div class="t" style="left:116.0px;top:808.6px;font-size:17px;letter-spacing:0.3px;color:#1c2434;font-weight:400;transform:scaleX(1.125);transform-origin:0 0;">Integración con Pasarela de Pago</div>
<svg class="a" style="left:1650px;top:808px" width="20.5" height="20.5" viewBox="0 0 20.5 20.5">
<path fill="#3d5cf0" d="M0 0H7.7V2.5H2.5V18H18V12.75H20.5V20.5H0Z M11.6 0H20.5V9.3H18V2.5H11.6Z"/><path stroke="#3d5cf0" stroke-width="2.4" d="M9.6 10.9L19.2 1.3"/></svg>
<svg class="a" style="left:1689.1px;top:815px" width="14" height="9" viewBox="0 0 14 9" fill="none" stroke="#1e293b" stroke-width="2.1" stroke-linecap="butt" stroke-linejoin="miter"><path d="M1.1 1.5L7 7.4L12.9 1.5"/></svg>
<div class="box" style="left:49px;top:869px;width:1681px;height:72px;background:#f4f4f4;border:1px solid #d3dcdc;border-radius:9px"></div>
<svg class="a" style="left:71.5px;top:892px" width="28" height="28" viewBox="0 0 28 28" fill="none" stroke="#2a3140" stroke-width="1.4" stroke-linejoin="round" stroke-linecap="round">
<path d="M13.5 1L19.7 4.5L13.5 8.1L7.2 4.5Z M7.2 4.5V12.3 M19.7 4.5V12.3 M13.5 8.1V23"/>
<path d="M7.2 12.3L13.5 15.7L7.2 19.3L0.8 15.7Z M0.8 15.7V23L7.2 26.5L13.5 23V15.7 M7.2 19.3V26.5"/>
<path d="M19.7 12.3L26.3 15.7L19.7 19.3L13.5 15.7Z M26.3 15.7V23L19.7 26.5L13.5 23 M19.7 19.3V26.5"/>
</svg>
<div class="t" style="left:116.0px;top:895.6px;font-size:17px;letter-spacing:0.3px;color:#1c2434;font-weight:400;transform:scaleX(1.156);transform-origin:0 0;">Facturación</div>
<svg class="a" style="left:1650px;top:895px" width="20.5" height="20.5" viewBox="0 0 20.5 20.5">
<path fill="#3d5cf0" d="M0 0H7.7V2.5H2.5V18H18V12.75H20.5V20.5H0Z M11.6 0H20.5V9.3H18V2.5H11.6Z"/><path stroke="#3d5cf0" stroke-width="2.4" d="M9.6 10.9L19.2 1.3"/></svg>
<svg class="a" style="left:1689.1px;top:902px" width="14" height="9" viewBox="0 0 14 9" fill="none" stroke="#1e293b" stroke-width="2.1" stroke-linecap="butt" stroke-linejoin="miter"><path d="M1.1 1.5L7 7.4L12.9 1.5"/></svg>
</body></html>
